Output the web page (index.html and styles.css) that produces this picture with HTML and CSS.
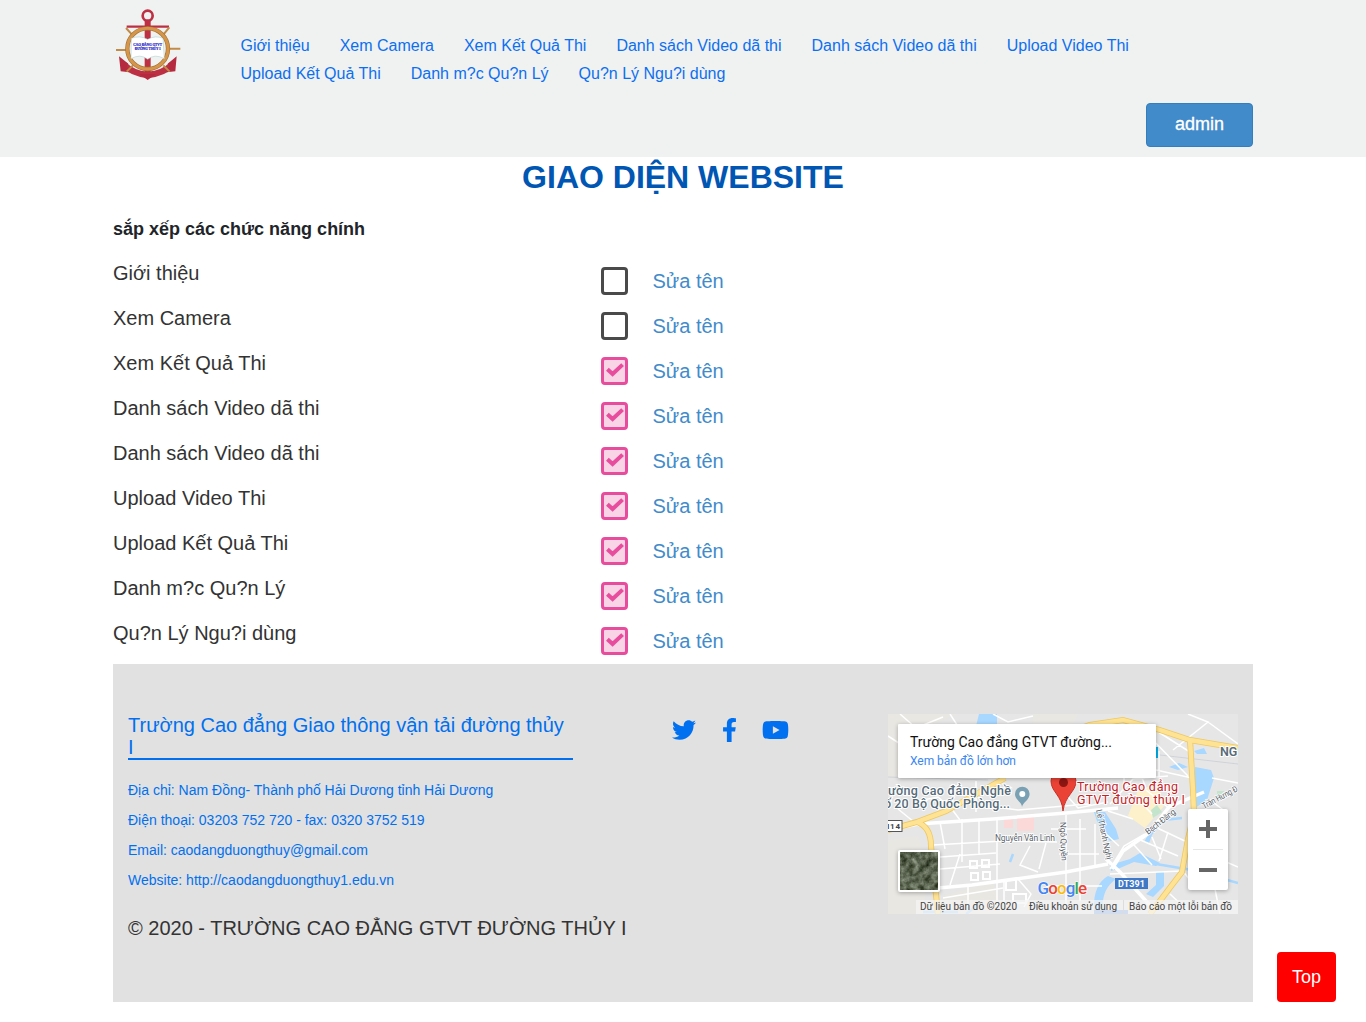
FILE: index.html
```html
<!DOCTYPE html>
<html lang="vi">
<head>
<meta charset="utf-8">
<title>Giao diện website</title>
<link rel="stylesheet" href="styles.css">
</head>
<body>
<svg width="0" height="0" class="defs" aria-hidden="true">
  <symbol id="check" viewBox="0 0 18 14"><path d="M1.400 6.200 6.600 11 16.600 1.600" fill="none" stroke="#e84c9d" stroke-width="4"/></symbol>
</svg>
<header class="header">
  <div class="container">
    <div class="header-top">
      <a class="logo" href="#">
        <svg width="70" height="74" viewBox="39 24 210 222">
          <g fill="none" stroke="#bd2f43">
            <circle cx="143" cy="47" r="15" stroke-width="8"/>
            <path d="M143 62V225" stroke-width="18"/>
            <path d="M80 80H207" stroke-width="7"/>
            <path d="M72 194Q96 220 143 225Q192 220 216 194" stroke-width="19"/>
          </g>
          <path d="M57 169 85 191 80 197 88 217 62 214ZM230 169 203 191 208 197 200 217 226 214ZM118 222 143 240 168 222Z" fill="#b52a3e"/>
          <path d="M48 150H80M207 146H241M78 84 98 106M208 82 190 104M99 196 80 215M190 196 209 215" stroke="#c28b47" stroke-width="6"/>
          <circle cx="143" cy="146" r="61" fill="none" stroke="#a77335" stroke-width="13"/>
          <circle cx="143" cy="146" r="61" fill="none" stroke="#d5964c" stroke-width="9"/>
          <path d="M94 115Q120 105 143 118Q166 105 189 115L193 176Q165 160 143 178Q121 160 93 176Z" fill="#fff" stroke="#9fc9c9" stroke-width="1.5"/>
          <text class="logo-text" x="143" y="139" textLength="86" lengthAdjust="spacingAndGlyphs">CAO ĐẲNG GTVT</text>
          <text class="logo-text" x="143" y="151" textLength="78" lengthAdjust="spacingAndGlyphs">ĐƯỜNG THỦY I</text>
        </svg>
      </a>
      <nav class="nav">
        <a href="#">Giới thiệu</a><a href="#">Xem Camera</a><a href="#">Xem Kết Quả Thi</a><a href="#">Danh sách Video dã thi</a><a href="#">Danh sách Video dã thi</a><a href="#">Upload Video Thi</a><a href="#">Upload Kết Quả Thi</a><a href="#">Danh m?c Qu?n Lý</a><a href="#">Qu?n Lý Ngu?i dùng</a>
      </nav>
    </div>
    <div class="account"><button class="admin">admin</button></div>
  </div>
</header>
<main class="container">
  <h1 class="title">GIAO DIỆN WEBSITE</h1>
  <h2 class="subtitle">sắp xếp các chức năng chính</h2>
  <div class="rows">
    <div class="row"><span class="name">Giới thiệu</span><span class="box"></span><a href="#">Sửa tên</a></div>
    <div class="row"><span class="name">Xem Camera</span><span class="box"></span><a href="#">Sửa tên</a></div>
    <div class="row"><span class="name">Xem Kết Quả Thi</span><span class="box on"><svg><use href="#check"/></svg></span><a href="#">Sửa tên</a></div>
    <div class="row"><span class="name">Danh sách Video dã thi</span><span class="box on"><svg><use href="#check"/></svg></span><a href="#">Sửa tên</a></div>
    <div class="row"><span class="name">Danh sách Video dã thi</span><span class="box on"><svg><use href="#check"/></svg></span><a href="#">Sửa tên</a></div>
    <div class="row"><span class="name">Upload Video Thi</span><span class="box on"><svg><use href="#check"/></svg></span><a href="#">Sửa tên</a></div>
    <div class="row"><span class="name">Upload Kết Quả Thi</span><span class="box on"><svg><use href="#check"/></svg></span><a href="#">Sửa tên</a></div>
    <div class="row"><span class="name">Danh m?c Qu?n Lý</span><span class="box on"><svg><use href="#check"/></svg></span><a href="#">Sửa tên</a></div>
    <div class="row"><span class="name">Qu?n Lý Ngu?i dùng</span><span class="box on"><svg><use href="#check"/></svg></span><a href="#">Sửa tên</a></div>
  </div>
  <footer class="footer">
    <div class="footer-cols">
      <div class="contact">
        <h3>Trường Cao đẳng Giao thông vận tải đường thủy I</h3>
        <p>Địa chỉ: Nam Đồng- Thành phố Hải Dương tỉnh Hải Dương</p>
        <p>Điện thoại: 03203 752 720 - fax: 0320 3752 519</p>
        <p>Email: caodangduongthuy@gmail.com</p>
        <p>Website: http://caodangduongthuy1.edu.vn</p>
      </div>
      <div class="social">
        <svg width="24" height="24" viewBox="0 0 512 512"><path d="M459.37 151.716c.325 4.548.325 9.097.325 13.645 0 138.72-105.583 298.558-298.558 298.558-59.452 0-114.68-17.219-161.137-47.106 8.447.974 16.568 1.299 25.34 1.299 49.055 0 94.213-16.568 130.274-44.832-46.132-.975-84.792-31.188-98.112-72.772 6.498.974 12.995 1.624 19.818 1.624 9.421 0 18.843-1.3 27.614-3.573-48.081-9.747-84.143-51.98-84.143-102.985v-1.299c13.969 7.797 30.214 12.67 47.431 13.319-28.264-18.843-46.781-51.005-46.781-87.391 0-19.492 5.197-37.36 14.294-52.954 51.655 63.675 129.3 105.258 216.365 109.807-1.624-7.797-2.599-15.918-2.599-24.04 0-57.828 46.782-104.934 104.934-104.934 30.213 0 57.502 12.67 76.67 33.137 23.715-4.548 46.456-13.32 66.599-25.34-7.798 24.366-24.366 44.833-46.132 57.827 21.117-2.273 41.584-8.122 60.426-16.243-14.292 20.791-32.161 39.308-52.628 54.253z"/></svg>
        <svg width="15" height="24" viewBox="0 0 320 512"><path d="M279.14 288l14.22-92.66h-88.91v-60.13c0-25.35 12.42-50.06 52.24-50.06h40.42V6.26S260.43 0 225.36 0c-73.22 0-121.08 44.38-121.08 124.72v70.62H22.89V288h81.39v224h100.17V288z"/></svg>
        <svg width="27" height="24" viewBox="0 0 576 512"><path d="M549.655 124.083c-6.281-23.65-24.787-42.276-48.284-48.597C458.781 64 288 64 288 64S117.22 64 74.629 75.486c-23.497 6.322-42.003 24.947-48.284 48.597-11.412 42.867-11.412 132.305-11.412 132.305s0 89.438 11.412 132.305c6.281 23.65 24.787 41.5 48.284 47.821C117.22 448 288 448 288 448s170.78 0 213.371-11.486c23.497-6.321 42.003-24.171 48.284-47.821 11.412-42.867 11.412-132.305 11.412-132.305s0-89.438-11.412-132.305zm-317.51 213.508V175.185l142.739 81.205-142.739 81.201z"/></svg>
      </div>
      <div class="map">
        <svg width="350" height="200" viewBox="0 0 350 200">
          <defs>
            <filter id="terrain" x="0" y="0" width="100%" height="100%" color-interpolation-filters="sRGB">
              <feTurbulence type="fractalNoise" baseFrequency=".16" numOctaves="4" seed="4"/>
              <feColorMatrix type="matrix" values=".6 .2 0 0 -.05  .6 .2 0 0 -.01  .6 .2 0 0 -.09  0 0 0 0 1"/>
            </filter>
          </defs>
          <rect width="350" height="200" fill="#e6e6e6"/>
          <path d="M0 0H70L45 10H10V63H0ZM0 126 30 122 40 160 35 200H0ZM55 182 105 168 115 200H52ZM145 0H190L185 10H145Z" fill="#e9e7e2"/>
          <path d="M116 105h9v9h-9zM129 103l17-2v16h-17z" fill="#fad9d8"/>
          <path d="M250 76 270 70 276 92 257 114 240 102Z" fill="#fdf1cc"/>
          <path d="M263 96 269 91 274 98 265 104ZM329 77h7v6h-7z" fill="#c4e5cb"/>
          <g fill="#a8d7ff">
            <path d="M91 0H109V12H88ZM307 53 323 56 326 64 319 86 307 94ZM306 37 316 34 319 40 309 40ZM281 53 291 49 300 53 290 56ZM206 98H217L228 115 231 125 222 127 212 116ZM206 200Q204 171 220 162L228 165Q212 176 215 200ZM222 151 242 145 252 139 272 149 268 152 246 148 232 154 223 157ZM268 158H276V172L265 183 258 180 268 171Z"/>
            <path d="M256 128 266 111 272 103 276 106 264 121 261 129Z"/>
          </g>
          <path d="M268 150 304 156 350 169M294 104 276 106M125 140l-3 8M35 198H70M78 200l13-10" fill="none" stroke="#a8d7ff" stroke-width="2.5"/>
          <path d="M0 63 100 66M220 35 350 50" stroke="#cfd3d8" fill="none"/>
          <g fill="none" stroke="#fff" stroke-width="1.500">
            <path d="M0 22 17 33M12 0 28 14 55 3M62 0 73 17M105 0 120 8 145 2M285 36 320 8 300 0M320 8 350 30M255 16 300 62M264 14 302 38M236 36V77M246 40 258 75M271 37V62M222 57 250 52 304 64M222 90 245 65 280 62M324 64 350 69M322 86 338 98M30 87 50 83 65 96M10 95 31 112M60 90 72 106M70 88 130 96 200 90M88 67V98M171 73 190 94 220 88"/>
            <path d="M45 131 115 127 169 128M52 108 57 135M74 105V148M91 105V140M109 103V195M52 143 108 139M52 155 112 150M55 184 115 174M62 171 72 140M80 171V193M116 166V190M130 165 143 180 136 193M142 132 132 151 150 158M158 129 151 155M178 101V195M192 105V187M207 110V153M163 115H198M171 140H211M158 172H214"/>
            <path d="M222 155 236 132 257 120M250 125 290 142M246 131 264 151M265 112 299 128M264 123 273 145M280 118 271 147M231 132 218 120M222 160 295 157M295 157 308 174M282 180 300 197M300 140 320 140 350 153M323 155 332 200M264 100 248 83M282 95 258 76M245 105 220 97"/>
          </g>
          <path d="M224 155 235 137 261 119 281 93 316 78M0 116 30 110 105 105 178 99 230 94M50 174 84 171 178 158 220 150M218 145 232 158 267 197" fill="none" stroke="#fff" stroke-width="3.500"/>
          <path d="M82 147h7v7h-7zM94 146h7v7h-7zM83 159h7v7h-7zM95 158h7v7h-7zM118 166h10v10h-10zM125 180h13v9h-13z" fill="none" stroke="#fff" stroke-width="2"/>
          <g fill="none" stroke="#eec85f" stroke-width="6"><path d="M190 15 202 11 235 6 272 16 302 26 350 34M302 26 305 76 306 100 300 125 294 158 284 171 262 200M0 116 29 108 58 97 117 64M29 108Q43 113 43 132L50 200"/></g>
          <g fill="none" stroke="#ffe394" stroke-width="4.400"><path d="M190 15 202 11 235 6 272 16 302 26 350 34M302 26 305 76 306 100 300 125 294 158 284 171 262 200M0 116 29 108 58 97 117 64M29 108Q43 113 43 132L50 200"/></g>
          <rect x="267" y="33" width="3" height="11" fill="#00b0ed"/>
          <path d="M175 97C174 81 163 78 163 67a12 12 0 0 1 25 0C188 78 177 81 175 97Z" fill="#ea4335" stroke="#c93227"/>
          <circle cx="175.500" cy="68.500" r="4.500" fill="#8c1612"/>
          <path d="M134 93C134 88 127 86 127 80a7.300 7.300 0 0 1 14.600 0C141.600 86 135 88 134 93Z" fill="#79a0b3"/><circle cx="134.300" cy="80" r="3" fill="#fff"/>
          <g class="place slate">
            <text x="0" y="81" textLength="123">ường Cao đẳng Nghề</text>
            <text x="-4" y="94" textLength="126">ố 20 Bộ Quốc Phòng...</text>
            <text class="heavy" x="332" y="42">NG</text>
          </g>
          <g class="place red">
            <text x="189" y="77" textLength="101">Trường Cao đẳng</text>
            <text x="189" y="90" textLength="108">GTVT đường thủy I</text>
          </g>
          <g class="street">
            <text x="107" y="127" textLength="60">Nguyễn Văn Linh</text>
            <text transform="translate(172 108) rotate(88)" textLength="39">Ngô Quyền</text>
            <text transform="translate(208 96) rotate(78)" textLength="51">Lê Thanh Nghị</text>
            <text transform="translate(260 121) rotate(-38)" textLength="36">Bạch Đằng</text>
            <text transform="translate(316 95) rotate(-28)" textLength="39" lengthAdjust="spacingAndGlyphs">Trần Hưng Đ</text>
          </g>
          <rect x="-3" y="106.500" width="17" height="11" fill="#fff" stroke="#555"/><text class="shield" x="-1" y="115" textLength="13">I14</text>
          <rect x="227" y="164" width="33" height="11" fill="#3e78c6"/><text class="shield light" x="230" y="173" textLength="27">DT391</text>
          <rect x="206" y="196" width="34" height="4" fill="#789fe0"/>
          <text class="google" x="149.500" y="180" textLength="49.500"><tspan fill="#4285f4">G</tspan><tspan fill="#ea4335">o</tspan><tspan fill="#fbbc05">o</tspan><tspan fill="#4285f4">g</tspan><tspan fill="#34a853">l</tspan><tspan fill="#ea4335">e</tspan></text>
          <rect x="28" y="186" width="322" height="14" fill="#f5f5f5" fill-opacity=".72"/>
          <g class="legal"><text x="32" y="196" textLength="97">Dữ liệu bản đồ ©2020</text><text x="141" y="196" textLength="88">Điều khoản sử dụng</text><text x="241" y="196" textLength="103">Báo cáo một lỗi bản đồ</text></g>
          <path d="M235.500 186v14" stroke="#ddd"/>
          <g class="lifted">
            <rect x="10" y="10" width="258" height="54" rx="1" fill="#fff"/>
            <rect x="10" y="136" width="42" height="42" rx="2" fill="#fff"/>
            <rect x="300" y="95" width="40" height="81" rx="2" fill="#fff"/>
          </g>
          <rect x="12" y="138" width="38" height="38" fill="#56624f" filter="url(#terrain)"/>
          <text class="card-title" x="22" y="33" textLength="202">Trường Cao đẳng GTVT đường...</text>
          <text class="card-link" x="22" y="51" textLength="106">Xem bản đồ lớn hơn</text>
          <path d="M311 115H329M320 106V124M311 156H329" stroke="#666" stroke-width="4"/>
          <path d="M305 135.500H335" stroke="#e6e6e6"/>
        </svg>
      </div>
    </div>
    <p class="copyright">© 2020 - TRƯỜNG CAO ĐẲNG GTVT ĐƯỜNG THỦY I</p>
  </footer>
</main>
<button class="top">Top</button>
</body>
</html>
```
FILE: styles.css
```css
* { box-sizing: border-box; }
body { margin: 0; color: #333; background: #fff; font-family: "Liberation Sans", Arial, sans-serif; font-size: 20px; }
a { color: #428bca; text-decoration: none; }
h1, h2, h3, p { margin: 0; }
.defs { display: block; }
.container { width: 1140px; margin: 0 auto; }
.header { height: 157px; padding-top: 8px; background: #f0f2f1; }
.header-top { display: flex; height: 95px; }
.logo { width: 112.500px; flex: none; }
.logo svg { display: block; }
.logo-text { font: bold 12.500px "Liberation Serif", serif; fill: #2020c8; stroke: #2020c8; stroke-width: .6px; text-anchor: middle; }
.nav { display: flex; flex-wrap: wrap; align-content: flex-start; flex: 1; padding-top: 24px; }
.nav a { padding: 0 15px; color: #0d6ff0; font-size: 16px; line-height: 28px; white-space: nowrap; }
.account { display: flex; justify-content: flex-end; }
.admin { width: 107px; height: 44px; padding: 0 0 2px; border: 1px solid #357ebd; border-radius: 4px; background: #428bca; color: #fff; font: 18px "Liberation Sans", Arial, sans-serif; -webkit-text-stroke: .3px #fff; }
.title { height: 53px; padding-top: 2px; color: #0056b3; font-size: 32px; line-height: 36px; text-align: center; }
.subtitle { height: 49px; padding-top: 9px; color: #212529; font-size: 18px; line-height: 20px; }
.row { display: grid; grid-template-columns: 488px 51.500px auto; height: 45px; align-items: start; line-height: 28px; }
.name { color: #333; }
.box { width: 27px; height: 28px; margin-top: 8px; border: 3px solid #4a4a4a; border-radius: 4px; }
.box.on { display: flex; justify-content: center; align-items: center; border-color: #e84c9d; background: #f9d4e7; }
.box svg { width: 18px; height: 14px; flex: none; margin-bottom: 2px; }
.row a { padding-top: 8px; }
.footer { height: 338px; padding: 50px 15px 0; background: #e1e1e1; }
.footer-cols { display: flex; height: 200px; }
.contact { width: 445px; color: #0070f0; }
.contact h3 { height: 46px; margin-bottom: 20px; border-bottom: 2px solid #0070f0; font-size: 20px; font-weight: 400; line-height: 22px; }
.contact p { height: 30px; font-size: 14px; line-height: 20px; }
.social { display: flex; width: 315px; padding: 4px 0 0 99px; fill: #0070f0; }
.social svg:nth-child(2) { margin: 0 25px 0 26px; }
.map { width: 350px; overflow: hidden; }
.map svg { display: block; font-family: Roboto, sans-serif; }
.place { font-size: 12.500px; font-weight: 400; paint-order: stroke; stroke: #fff; stroke-width: 2px; }
.heavy { font-weight: 600; }
.slate { fill: #566b79; font-weight: 500; }
.red { fill: #c5221f; }
.street { fill: #59626a; font-size: 8.500px; paint-order: stroke; stroke: #fff; stroke-width: 1.500px; }
.shield { fill: #444; font-size: 8px; font-weight: 700; }
.shield.light { fill: #fff; font-size: 9px; }
.google { font: 500 17px Roboto, sans-serif; paint-order: stroke; stroke: #fff; stroke-width: 1px; }
.legal { font-size: 10px; fill: #444; }
.lifted { filter: drop-shadow(0 1px 2px rgba(0, 0, 0, .3)); }
.card-title { fill: #111; font-size: 14px; font-weight: 400; }
.card-link { fill: #3b86f0; font-size: 12px; }
.copyright { padding-top: 3px; line-height: 22px; }
.top { position: fixed; right: 30px; bottom: 20px; width: 59px; height: 50px; padding: 0; border: 0; border-radius: 4px; background: #f00; color: #fff; font: 18px "Liberation Sans", Arial, sans-serif; }
```
